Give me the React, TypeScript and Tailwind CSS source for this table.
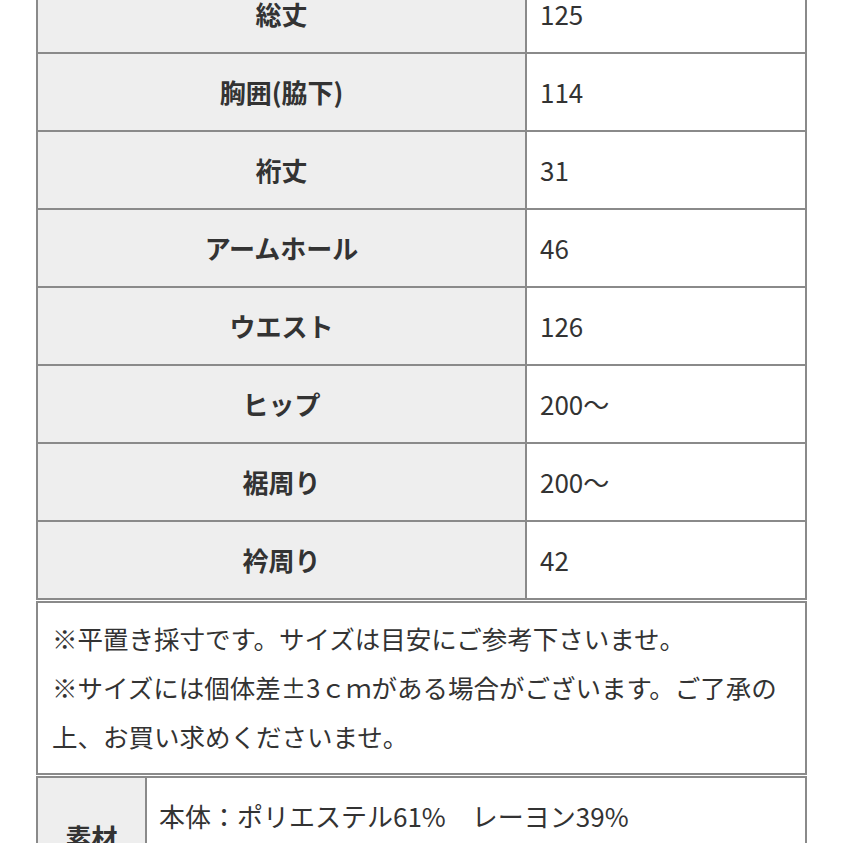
import React from 'react';

const rows: [string, string][] = [
  ['総丈', '125'],
  ['胸囲(脇下)', '114'],
  ['裄丈', '31'],
  ['アームホール', '46'],
  ['ウエスト', '126'],
  ['ヒップ', '200〜'],
  ['裾周り', '200〜'],
  ['衿周り', '42'],
];

const font = { fontFamily: '"Hiragino Sans", "Noto Sans CJK JP", "Noto Sans", sans-serif' };

export default function App() {
  return (
    <div className="w-[843px] h-[843px] overflow-hidden bg-white text-[#333]" style={font}>
      <div className="ml-[36px] w-[771px] -mt-[26px]">
        {/* Size table */}
        <table className="w-full border-collapse border-2 border-[#8a8a8a] text-[26px]">
          <tbody>
            {rows.map(([label, value]) => (
              <tr key={label} className="h-[78px]">
                <th className="w-[489px] border-2 border-[#8a8a8a] bg-[#eeeeee] font-bold text-center align-middle leading-[34px]">
                  {label}
                </th>
                <td className="border-2 border-[#8a8a8a] pl-[13px] align-middle font-normal leading-[34px]">
                  {value}
                </td>
              </tr>
            ))}
          </tbody>
        </table>

        {/* Notes */}
        <table className="w-full mt-[1px] border-collapse border-2 border-[#8a8a8a] text-[25.5px]">
          <tbody>
            <tr>
              <td className="border-2 border-[#8a8a8a] pl-[14px] pr-[14px] pt-[10px] pb-[13px] leading-[49px]">
                ※平置き採寸です。サイズは目安にご参考下さいませ。
                <br />
                ※サイズには個体差±3ｃｍがある場合がございます。ご了承の上、お買い求めくださいませ。
              </td>
            </tr>
          </tbody>
        </table>

        {/* Material */}
        <table className="w-full mt-[1px] border-collapse border-2 border-[#8a8a8a] text-[26px]">
          <tbody>
            <tr className="h-[118px]">
              <th className="w-[109px] border-2 border-[#8a8a8a] bg-[#eeeeee] font-bold text-center align-middle">
                素材
              </th>
              <td className="border-2 border-[#8a8a8a] pl-[12px] pt-[20px] align-top font-normal leading-[36px]">
                本体：ポリエステル61%　レーヨン39%
              </td>
            </tr>
          </tbody>
        </table>
      </div>
    </div>
  );
}
